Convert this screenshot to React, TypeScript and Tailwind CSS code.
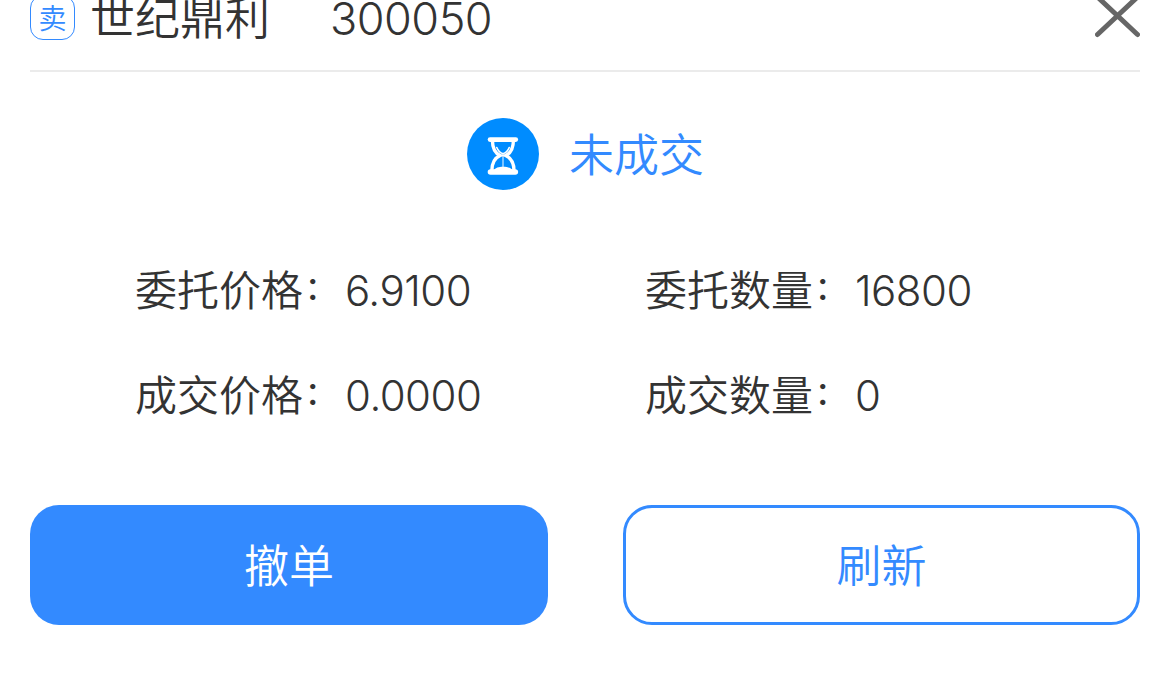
import React from 'react';

interface FieldProps {
  label: string;
  value: string;
}

const Field: React.FC<FieldProps> = ({ label, value }) => (
  <div className="flex h-[60px] items-center text-[42px] leading-[60px] text-[#333333]">
    <span className="flex w-[210px] flex-shrink-0 pb-[6px] font-['Noto_Sans_CJK_SC',sans-serif] font-[350] whitespace-nowrap">
      {label}
      <span className="-mt-[2px] ml-[2px] text-[31px] font-medium">：</span>
    </span>
    <span className="tracking-[-0.5px]">{value}</span>
  </div>
);

const HourglassIcon: React.FC = () => (
  <svg className="h-[72px] w-[72px] flex-shrink-0" viewBox="0 0 72 72" fill="none">
    <circle cx="36" cy="36" r="36" fill="#008cff" />
    <path d="M23 21.6H48.8" stroke="#fff" strokeWidth="4.6" strokeLinecap="round" />
    <path d="M23.5 54H48.3" stroke="#fff" strokeWidth="5.6" strokeLinecap="round" />
    <path
      d="M25.4 22C25.4 30.5 28.2 35.3 33.2 37.5C28.2 39.7 24.8 45 24.8 53M46.4 22C46.4 30.5 43.6 35.3 38.6 37.5C43.6 39.7 47 45 47 53"
      stroke="#fff"
      strokeWidth="3.4"
    />
    <path d="M29.8 29.5C31 32.5 32.5 34.8 36 35.8C39.5 34.8 41 32.5 42.2 29.5" stroke="#fff" strokeWidth="1.6" strokeLinecap="round" />
    <path d="M36 35V51" stroke="#fff" strokeOpacity="0.65" strokeWidth="1.5" />
    <path d="M26 53C28 49.6 32 48.7 36 48.7S44 49.6 46 53Z" fill="#fff" />
  </svg>
);

const App: React.FC = () => {
  return (
    <div className="flex h-[682px] w-full flex-col overflow-hidden bg-white px-[30px] font-['Inter','Noto_Sans_CJK_SC',sans-serif] font-[350]">
      {/* Header */}
      <header className="flex h-[72px] flex-shrink-0 items-start border-b-2 border-[#ebebeb] text-[45px] text-[#333333]">
        <span className="-mt-[5px] flex h-[45px] w-[45px] flex-shrink-0 items-center justify-center rounded-[13px] border-[1.5px] border-[#338aff] pt-[2px] text-[28px] leading-none text-[#338aff]">
          卖
        </span>
        <span className="-mt-[14px] ml-[15px] leading-[65px]">世纪鼎利</span>
        <span className="-mt-[14px] ml-[60px] leading-[65px] tracking-[-0.5px]">300050</span>
        <button className="-mt-[5px] ml-auto" aria-label="关闭">
          <svg className="h-[45px] w-[45px]" viewBox="0 0 45 45" fill="none" stroke="#666666" strokeWidth="5" strokeLinecap="round">
            <path d="M2.5 2L42.5 39.5M42.5 2L2.5 39.5" />
          </svg>
        </button>
      </header>

      {/* Status */}
      <div className="mt-[46px] flex h-[72px] items-center justify-center gap-[30px] pl-px">
        <HourglassIcon />
        <span className="pt-[2px] text-[45px] leading-[65px] text-[#338aff]">未成交</span>
      </div>

      {/* Order details */}
      <div className="mt-[71px] grid grid-cols-[510px_1fr] gap-y-[45px] pl-[105px]">
        <Field label="委托价格" value="6.9100" />
        <Field label="委托数量" value="16800" />
        <Field label="成交价格" value="0.0000" />
        <Field label="成交数量" value="0" />
      </div>

      {/* Actions */}
      <div className="mt-[79px] flex justify-between text-[45px] leading-[65px]">
        <button className="h-[120px] w-[518px] rounded-[29px] bg-[#338aff] pt-[3px] text-white">撤单</button>
        <button className="h-[120px] w-[517px] rounded-[29px] border-[3px] border-[#338aff] pt-[3px] text-[#338aff]">刷新</button>
      </div>
    </div>
  );
};

export default App;
